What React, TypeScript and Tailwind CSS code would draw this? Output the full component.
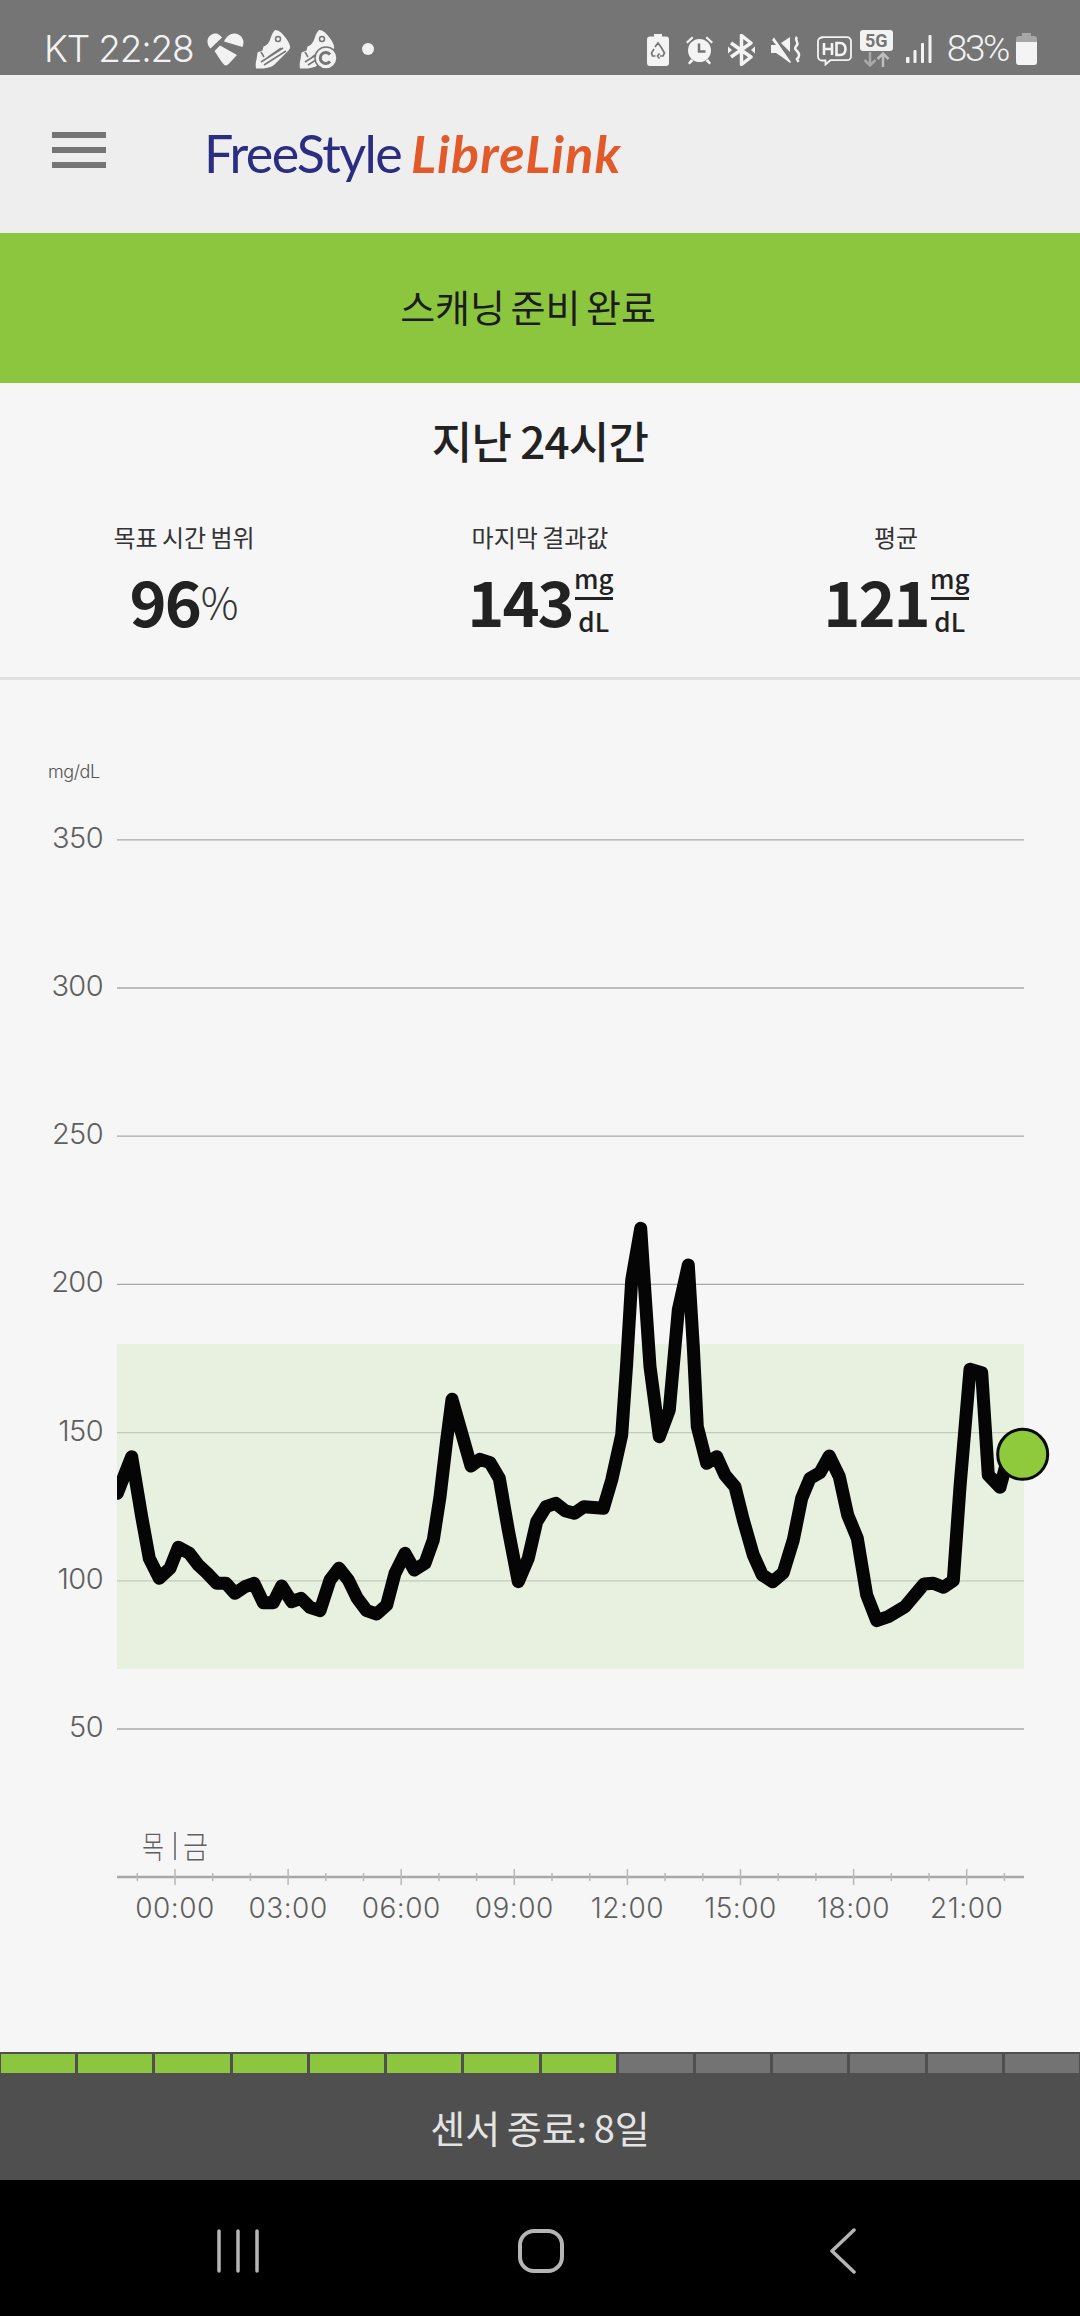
import React from "react";

const KR = '"Noto Sans CJK KR", sans-serif';
const NUM = 'Inter, "Noto Sans CJK KR", sans-serif';

const a: [number, number][] = [[52,880],[95,770],[125,950],[148,1075],[178,1135],[210,1105],[235,1042],[268,1060],[295,1095],[320,1118],[350,1150],[378,1150],[405,1180],[435,1160],[462,1150],[490,1208],[520,1208],[545,1158],[575,1205],[603,1195],[630,1222],[660,1232],[690,1140],[717,1105],[745,1140],[772,1195],[800,1232],[830,1242],[860,1215],[885,1120],[915,1060],[943,1110],[975,1090],[1000,1020],[1020,890],[1040,720],[1056,598],[1085,700],[1113,798],[1140,778],[1170,788],[1198,835],[1225,990],[1255,1145],[1285,1075],[1310,965],[1338,920],[1367,910],[1395,932],[1423,940],[1452,920]];
const b: [number, number][] = [[70,925],[95,840],[125,705],[140,490],[155,240],[182,85],[195,280],[210,500],[238,710],[268,630],[295,330],[325,195],[340,440],[352,680],[380,790],[410,770],[435,825],[465,860],[490,960],[520,1065],[547,1125],[578,1145],[610,1118],[640,1020],[665,895],[690,835],[720,818],[748,768],[778,830],[803,945],[832,1015],[860,1185],[890,1262],[925,1250],[975,1220],[1032,1152],[1060,1150],[1090,1162],[1120,1142],[1140,860],[1170,508],[1205,518],[1225,825],[1260,862],[1285,770]];
const line = [
  ...a.map(([x, y]) => `${(100 + x / 3).toFixed(1)},${(1200 + y / 3).toFixed(1)}`),
  ...b.map(([x, y]) => `${(580 + x / 3).toFixed(1)},${(1200 + y / 3).toFixed(1)}`),
].join(" ");

const yTicks = [350, 300, 250, 200, 150, 100, 50];
const yOf = (v: number) => 1729 - (v - 50) * 2.964;
const hours = Array.from({ length: 24 }, (_, h) => h - 1);
const labels = ["00:00", "03:00", "06:00", "09:00", "12:00", "15:00", "18:00", "21:00"];
const xOf = (h: number) => 175 + h * 37.7;

function Chart() {
  return (
    <svg viewBox="0 680 1080 1372" className="block w-full h-full">
      <defs>
        <clipPath id="plot"><rect x="117" y="1100" width="960" height="700" /></clipPath>
      </defs>
      <rect x="117" y="1344" width="907" height="325" fill="#e8f0e0" />
      {yTicks.map((v) => (
        <g key={v}>
          <line x1="117" x2="1024" y1={yOf(v)} y2={yOf(v)} stroke={v === 150 || v === 100 ? "#c3cabd" : "#a8a8a8"} strokeWidth="1.3" />
          <text x="103" y={yOf(v) + 8} textAnchor="end" fontFamily={NUM} fontWeight="300" fontSize="29" letterSpacing="-0.6" fill="#5f5f5f">{v}</text>
        </g>
      ))}
      <text x="48" y="778" fontFamily={NUM} fontWeight="300" fontSize="18" fill="#555" letterSpacing="-0.4">mg/dL</text>
      <polyline points={line} clipPath="url(#plot)" fill="none" stroke="#050505" strokeWidth="13" strokeLinejoin="round" strokeLinecap="round" />
      <circle cx="1022.7" cy="1454.3" r="25" fill="#8fca3c" stroke="#0a0a0a" strokeWidth="3" />
      <text x="142" y="1858" textLength="22" lengthAdjust="spacingAndGlyphs" fontFamily={KR} fontWeight="300" fontSize="31" fill="#5f5f5f">목</text>
      <line x1="175" x2="175" y1="1832" y2="1860" stroke="#5f5f5f" strokeWidth="1.5" />
      <text x="183" y="1858" textLength="25" lengthAdjust="spacingAndGlyphs" fontFamily={KR} fontWeight="300" fontSize="31" fill="#5f5f5f">금</text>
      <line x1="117" x2="1024" y1="1877" y2="1877" stroke="#a8a8a8" strokeWidth="2.5" />
      {hours.map((h) => (
        <line key={h} x1={xOf(h)} x2={xOf(h)} y1={h % 3 === 0 ? 1869 : 1873} y2={h % 3 === 0 ? 1885 : 1881} stroke="#b8b8b8" strokeWidth="1.5" />
      ))}
      {labels.map((t, i) => (
        <text key={t} x={xOf(i * 3)} y="1918" textAnchor="middle" fontFamily={NUM} fontWeight="300" fontSize="28" letterSpacing="0.5" fill="#5f5f5f">{t}</text>
      ))}
    </svg>
  );
}

function Heart() {
  return (
    <svg width="37" height="34" viewBox="0 0 37 34" fill="#f2f2f2">
      <path d="M8 1.5C3 2 0 6 .5 10.5c.3 2.5 1.5 4.5 3 6L15 5.5C13 3 11 1.2 8 1.5z" />
      <path d="M17 9.5C19 5 23 1.5 27.5 1.5c5 0 9 4.5 9 9 0 1.500-.5 3-1 4.500z" />
      <path d="M7.500 19 13 13.500 30 23l-6.500 7c-1.500 1.700-3.500 3.500-5 3.500C16 33 11.500 25 7.500 19z" />
    </svg>
  );
}

function Shoe({ badge }: { badge?: boolean }) {
  return (
    <svg width="38" height="39" viewBox="0 0 38 39" fill="#f2f2f2">
      <path d="M20 0c4 0 7 3 10 7 3 3.500 4 6 5 9 .5 2-.5 3.500-2 5L19 35c-4 3-11 4-18 3.500-.5-3-.5-6 .5-9l1-7 5-2 1-4c3-1 6-4 7-8 1-3 2-6 4.500-8.500z" />
      <g stroke="#757575" strokeWidth="1.500" fill="none">
        <path d="M9 35 31 21M6 32l22-14M13 27l13-9" />
        <circle cx="23" cy="9" r="2.500" />
        <path d="M6 22l3 5" />
      </g>
      {badge && (
        <>
          <circle cx="27" cy="28" r="11" fill="#f2f2f2" stroke="#757575" strokeWidth="1.500" />
          <path d="M31 24.500a5.500 5.500 0 1 0 0 7" stroke="#757575" strokeWidth="3" fill="none" />
        </>
      )}
    </svg>
  );
}

function Recycle() {
  return (
    <svg width="22" height="32" viewBox="0 0 22 32">
      <path d="M7 0h8v2.500h4a3 3 0 0 1 3 3V29a3 3 0 0 1-3 3H3a3 3 0 0 1-3-3V5.500a3 3 0 0 1 3-3h4z" fill="#f4f4f4" />
      <path d="M8 13l3-4 3 4 3.500 6-1.500 3h-3M8.500 22H5.500L4.500 19 7 15M12.500 19.500l-2 2.500 2 2.500" stroke="#757575" strokeWidth="1.700" fill="none" />
    </svg>
  );
}

function Alarm() {
  return (
    <svg width="29" height="30" viewBox="0 0 29 30" fill="#f4f4f4">
      <circle cx="14.500" cy="15.500" r="11.500" />
      <path d="M1 7 7 1.500l1.500 1.500L2.500 8.500zM28 7l-6-5.500L20.500 3l6 5.500z" />
      <path d="M6 24l-3 4 1.500 1.500 4-3.500zM23 24l3 4-1.500 1.500-4-3.500z" />
      <path d="M14 8.500v8h6.500" stroke="#757575" strokeWidth="2.500" fill="none" />
    </svg>
  );
}

function Bluetooth() {
  return (
    <svg width="27" height="32" viewBox="0 0 27 32">
      <path d="M3 9l20 14-9.500 7.500V1.500L23 9 3 23" stroke="#f4f4f4" strokeWidth="3.500" fill="none" strokeLinejoin="round" />
      <path d="M0 12.500 4 16l-4 3.500zM27 12.500 23 16l4 3.500z" fill="#f4f4f4" />
    </svg>
  );
}

function Mute() {
  return (
    <svg width="30" height="28" viewBox="0 0 30 28">
      <path d="M0 9h5L1 4l2-2.500L20 26l-1 1-8-6-6-4H0zM10 7l9-6v15z" fill="#f4f4f4" />
      <path d="M26 1c-3 3 2 5 0 8s-3 3 0 6 2.500 6 0 8l1.500 3" stroke="#f4f4f4" strokeWidth="2.500" fill="none" />
    </svg>
  );
}

function Hd() {
  return (
    <svg width="35" height="30" viewBox="0 0 35 30">
      <path d="M5 1.200h25a4 4 0 0 1 4 4v15a4 4 0 0 1-4 4H13.500L8.500 28.500v-4H5a4 4 0 0 1-4-4v-15a4 4 0 0 1 4-4z" fill="none" stroke="#f4f4f4" strokeWidth="1.800" />
      <path d="M7 7v12M15 7v12M7 13h8M19.500 7v12h3.500c3.500 0 5.500-2.500 5.500-6s-2-6-5.500-6z" fill="none" stroke="#f4f4f4" strokeWidth="2.600" />
    </svg>
  );
}

function FiveG() {
  return (
    <div className="relative w-[33px] h-[37px]">
      <div className="absolute left-0 top-0 w-[33px] h-[21px] rounded-[3px] bg-[#f2f2f2] flex items-center justify-center text-[18px] font-bold leading-none text-[#757575]" style={{ fontFamily: "Roboto, sans-serif" }}>5G</div>
      <svg className="absolute left-[3px] top-[22px]" width="27" height="15" viewBox="0 0 27 15" fill="none" strokeWidth="2.500">
        <path d="M7 0v12M1.500 8 7 13.500 12.500 8" stroke="#a8a8a8" />
        <path d="M20 15V2M14.500 7 20 1.500 25.500 7" stroke="#bdbdbd" />
      </svg>
    </div>
  );
}

function Signal() {
  return (
    <svg width="26" height="28" viewBox="0 0 26 28" fill="#f4f4f4">
      <rect x="0" y="22" width="3.500" height="6" rx="1" />
      <rect x="7.500" y="15" width="3" height="13" rx="1" />
      <rect x="15" y="8" width="3" height="20" rx="1" />
      <rect x="22.500" y="0" width="3" height="28" rx="1" />
    </svg>
  );
}

function BatteryIcon() {
  return (
    <svg width="21" height="32" viewBox="0 0 21 32">
      <path d="M6 0h9v3h3a3 3 0 0 1 3 3v3H0V6a3 3 0 0 1 3-3h3z" fill="#a6a6a6" />
      <path d="M0 9h21v20a3 3 0 0 1-3 3H3a3 3 0 0 1-3-3z" fill="#f4f4f4" />
    </svg>
  );
}

function StatusBar() {
  return (
    <div className="h-[75px] bg-[#757575] flex items-start text-[#f2f2f2] pt-[30px]" style={{ fontFamily: NUM }}>
      <span className="ml-[44px] text-[37px] leading-[38px] font-light tracking-[-1.2px]">KT 22:28</span>
      <div className="ml-[14px] flex items-center h-[38px]">
        <Heart />
      </div>
      <div className="ml-[11px] h-[38px]"><Shoe /></div>
      <div className="ml-[6px] h-[38px]"><Shoe badge /></div>
      <div className="ml-[25px] mt-[13px] w-[12px] h-[12px] rounded-full bg-[#f2f2f2]" />
      <div className="ml-auto mr-[43px] flex items-start">
        <div className="mt-[4px]"><Recycle /></div>
        <div className="ml-[16px] mt-[5px]"><Alarm /></div>
        <div className="ml-[14px] mt-[4px]"><Bluetooth /></div>
        <div className="ml-[16px] mt-[6px]"><Mute /></div>
        <div className="ml-[16px] mt-[6px]"><Hd /></div>
        <div className="ml-[8px] mt-0"><FiveG /></div>
        <div className="ml-[13px] mt-[5px]"><Signal /></div>
        <span className="ml-[15px] text-[37px] leading-[38px] font-light tracking-[-2.4px]" style={{ fontFamily: "Roboto, sans-serif" }}>83%</span>
        <div className="ml-[8px] mt-[3px]"><BatteryIcon /></div>
      </div>
    </div>
  );
}

function Header() {
  return (
    <div className="h-[158px] bg-[#eeeeee] flex items-center pl-[52px]">
      <div className="flex flex-col gap-[9px] w-[54px] -mt-[8px]">
        <div className="h-[6px] bg-[#757575]" />
        <div className="h-[6px] bg-[#757575]" />
        <div className="h-[6px] bg-[#757575]" />
      </div>
      <div className="ml-[98px] flex items-baseline -mt-[3px] whitespace-nowrap" style={{ fontFamily: "Lato, sans-serif" }}>
        <span className="text-[52px] leading-none text-[#2b2e80] tracking-[-1.6px]">FreeStyle</span>
        <span className="ml-[10px] text-[52px] leading-none italic font-bold text-[#e2592a] tracking-[1.2px]">LibreLink</span>
      </div>
    </div>
  );
}

function Unit() {
  return (
    <span className="ml-[2px] flex flex-col items-center w-[38px] text-[26px] font-medium leading-none text-[#222]">
      <span className="pb-[7px] leading-[24px]">mg</span>
      <span className="w-full h-[3px] bg-[#222]" />
      <span className="pt-[9px] leading-[24px]">dL</span>
    </span>
  );
}

function Stat({ label, value, suffix }: { label: string; value: string; suffix?: boolean }) {
  return (
    <div className="flex flex-col items-center">
      <span className="text-[24px] leading-[32px] text-[#333] [word-spacing:-1px]" style={{ fontFamily: KR }}>{label}</span>
      <div className="mt-[7px] h-[78px] flex items-center" style={{ fontFamily: KR }}>
        <span className="text-[63px] leading-none font-bold tracking-[-2px] text-[#222]">{value}</span>
        {suffix ? <span className="ml-[1px] mt-[4px] text-[42px] leading-none font-light text-[#333]">%</span> : <Unit />}
      </div>
    </div>
  );
}

export default function App() {
  return (
    <div className="w-[1080px] h-[2316px] flex flex-col overflow-hidden bg-[#f6f6f6]">
      <StatusBar />
      <Header />
      <div className="h-[150px] bg-[#8cc63f] flex items-center justify-center pr-[24px] pb-[5px]">
        <span className="text-[38px] leading-none text-[#1c1c1c] [word-spacing:-3px]" style={{ fontFamily: KR }}>스캐닝 준비 완료</span>
      </div>
      <div className="h-[297px] border-b-[3px] border-[#e0e0e0] flex flex-col">
        <h1 className="mt-[31px] text-center text-[44px] leading-[52px] font-medium tracking-[-0.8px] text-[#222]" style={{ fontFamily: KR }}>지난 24시간</h1>
        <div className="mt-[55px] grid grid-cols-3 px-[6px]">
          <Stat label="목표 시간 범위" value="96" suffix />
          <Stat label="마지막 결과값" value="143" />
          <Stat label="평균" value="121" />
        </div>
      </div>
      <div className="flex-1 min-h-0">
        <Chart />
      </div>
      <div className="h-[22px] bg-[#4f4f4f] grid grid-cols-[repeat(14,1fr)] gap-[3px] px-[1px] pt-[2px] pb-[1px]">
        {Array.from({ length: 14 }, (_, i) => (
          <div key={i} className={i < 8 ? "bg-[#8cc63f]" : "bg-[#737373]"} />
        ))}
      </div>
      <div className="h-[106px] bg-[#4f4f4f] flex items-center justify-center">
        <span className="text-[38px] leading-none text-[#e4e4e4] [word-spacing:-2px]" style={{ fontFamily: KR }}>센서 종료: 8일</span>
      </div>
      <div className="h-[136px] bg-black flex items-center justify-between pl-[217px] pr-[224px] pt-[5px]">
        <svg width="42" height="44" viewBox="0 0 42 44" stroke="#b5b5b5" strokeWidth="3.500" strokeLinecap="round">
          <path d="M2 2v40M21 2v40M40 2v40" />
        </svg>
        <svg className="mr-[8px]" width="46" height="44" viewBox="0 0 46 44" fill="none" stroke="#b5b5b5" strokeWidth="4">
          <rect x="2" y="2" width="42" height="40" rx="14" />
        </svg>
        <svg width="26" height="46" viewBox="0 0 26 46" fill="none" stroke="#b5b5b5" strokeWidth="3.500" strokeLinecap="round" strokeLinejoin="round">
          <path d="M24 2 2 23l22 21" />
        </svg>
      </div>
    </div>
  );
}
